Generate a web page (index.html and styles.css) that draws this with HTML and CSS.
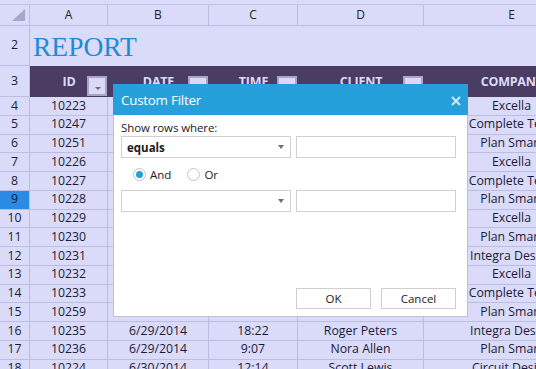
FILE: index.html
```html
<!DOCTYPE html>
<html>
<head>
<meta charset="utf-8">
<link rel="stylesheet" href="styles.css">
</head>
<body>
<div class="sheet">
  <div class="grid colhdr-row">
    <div class="c corner"><span class="tri"></span></div>
    <div class="c ch">A</div><div class="c ch">B</div><div class="c ch">C</div><div class="c ch">D</div><div class="c ch">E</div>
  </div>
  <div class="grid title-row">
    <div class="c rh">2</div>
    <div class="title">REPORT</div>
  </div>
  <div class="grid head-row">
    <div class="c rh">3</div>
    <div class="hc"><span>ID</span><span class="fbtn"></span></div>
    <div class="hc"><span>DATE</span><span class="fbtn"></span></div>
    <div class="hc"><span>TIME</span><span class="fbtn"></span></div>
    <div class="hc"><span>CLIENT</span><span class="fbtn"></span></div>
    <div class="hc"><span>COMPANY</span><span class="fbtn"></span></div>
  </div>
  <div class="grid data">
    <div class="c rh">4</div><div class="c">10223</div><div class="c"></div><div class="c"></div><div class="c"></div><div class="c">Excella</div>
    <div class="c rh">5</div><div class="c">10247</div><div class="c"></div><div class="c"></div><div class="c"></div><div class="c">Complete Tech</div>
    <div class="c rh">6</div><div class="c">10251</div><div class="c"></div><div class="c"></div><div class="c"></div><div class="c">Plan Smart</div>
    <div class="c rh">7</div><div class="c">10226</div><div class="c"></div><div class="c"></div><div class="c"></div><div class="c">Excella</div>
    <div class="c rh">8</div><div class="c">10227</div><div class="c"></div><div class="c"></div><div class="c"></div><div class="c">Complete Tech</div>
    <div class="c rh sel">9</div><div class="c">10228</div><div class="c"></div><div class="c"></div><div class="c"></div><div class="c">Plan Smart</div>
    <div class="c rh">10</div><div class="c">10229</div><div class="c"></div><div class="c"></div><div class="c"></div><div class="c">Excella</div>
    <div class="c rh">11</div><div class="c">10230</div><div class="c"></div><div class="c"></div><div class="c"></div><div class="c">Plan Smart</div>
    <div class="c rh">12</div><div class="c">10231</div><div class="c"></div><div class="c"></div><div class="c"></div><div class="c">Integra Design</div>
    <div class="c rh">13</div><div class="c">10232</div><div class="c"></div><div class="c"></div><div class="c"></div><div class="c">Excella</div>
    <div class="c rh">14</div><div class="c">10233</div><div class="c"></div><div class="c"></div><div class="c"></div><div class="c">Complete Tech</div>
    <div class="c rh">15</div><div class="c">10259</div><div class="c"></div><div class="c"></div><div class="c"></div><div class="c">Plan Smart</div>
    <div class="c rh">16</div><div class="c">10235</div><div class="c">6/29/2014</div><div class="c">18:22</div><div class="c">Roger Peters</div><div class="c">Integra Design</div>
    <div class="c rh">17</div><div class="c">10236</div><div class="c">6/29/2014</div><div class="c">9:07</div><div class="c">Nora Allen</div><div class="c">Plan Smart</div>
    <div class="c rh">18</div><div class="c">10224</div><div class="c">6/30/2014</div><div class="c">12:14</div><div class="c">Scott Lewis</div><div class="c">Circuit Design</div>
  </div>
</div>

<div class="dialog">
  <div class="dlg-title">
    <span>Custom Filter</span>
    <svg class="close" width="10" height="10" viewBox="0 0 10 10"><path d="M1 1 L9 9 M9 1 L1 9" stroke="#d4ecf8" stroke-width="1.8" fill="none"/></svg>
  </div>
  <div class="dlg-body">
    <div class="lbl">Show rows where:</div>
    <div class="cond">
      <div class="combo"><span class="val">equals</span><span class="arr"></span></div>
      <div class="tb"></div>
    </div>
    <div class="logic">
      <span class="opt"><span class="radio on"></span>And</span>
      <span class="opt"><span class="radio"></span>Or</span>
    </div>
    <div class="cond">
      <div class="combo"><span class="val"></span><span class="arr"></span></div>
      <div class="tb"></div>
    </div>
    <div class="btns">
      <span class="btn">OK</span>
      <span class="btn">Cancel</span>
    </div>
  </div>
</div>
</body>
</html>
```

FILE: styles.css
```css
html, body {
  margin: 0;
  padding: 0;
}
body {
  width: 536px;
  height: 369px;
  overflow: hidden;
  background: #dadaf9;
  font-family: "Open Sans", "Noto Sans", sans-serif;
  color: #1a1a36;
  position: relative;
}
.sheet {
  padding-top: 4px;
}
.grid {
  display: grid;
  grid-template-columns: 30px 78px 101px 89px 126px 176px;
  width: 600px;
}
.c {
  box-sizing: border-box;
  border-right: 1px solid #bcbce4;
  border-bottom: 1px solid #bcbce4;
  display: flex;
  align-items: center;
  justify-content: center;
  font-size: 12.3px;
  white-space: nowrap;
  overflow: visible;
  line-height: 1;
}
.colhdr-row {
  border-top: 1px solid #c4c4ea;
  height: 21px;
  grid-template-rows: 21px;
}
.colhdr-row .c {
  font-size: 12px;
  color: #222;
}
.corner {
  position: relative;
}
.tri {
  position: absolute;
  right: 4px;
  bottom: 4px;
  width: 0;
  height: 0;
  border-left: 13px solid transparent;
  border-bottom: 12px solid #a7a7c9;
}
.title-row {
  grid-template-rows: 40px;
}
.title {
  grid-column: 2 / 7;
  font-family: "Liberation Serif", serif;
  font-size: 27.5px;
  color: #1e8ad8;
  display: flex;
  align-items: center;
  padding-left: 3px;
  padding-top: 2px;
}
.head-row {
  grid-template-rows: 31px;
}
.hc {
  background: #4a3c63;
  color: #dcdcf6;
  font-weight: 700;
  font-size: 12.5px;
  display: flex;
  align-items: center;
  justify-content: center;
  position: relative;
  letter-spacing: -0.2px;
}
.fbtn {
  position: absolute;
  right: 1px;
  top: 10px;
  width: 20px;
  height: 20px;
  box-sizing: border-box;
  border: 2px solid #a9a5c4;
  background: #dadaf6;
}
.fbtn::after {
  content: "";
  position: absolute;
  left: 6px;
  top: 9px;
  border-left: 3px solid transparent;
  border-right: 3px solid transparent;
  border-top: 3px solid #6a6a80;
}
.data {
  grid-auto-rows: 18.75px;
}
.sel {
  background: #2b8ae2;
}

/* dialog */
.dialog {
  position: absolute;
  left: 113px;
  top: 84px;
  width: 355px;
  height: 233px;
  box-sizing: border-box;
  border: 1px solid #c0c0d4;
  border-top: 0;
  background: #fff;
  display: flex;
  flex-direction: column;
  color: #1a1a1a;
}
.dlg-title {
  height: 31px;
  margin: 0 -1px;
  background: #26a0da;
  color: #fff;
  font-size: 13.3px;
  display: flex;
  align-items: center;
  justify-content: space-between;
  padding: 0 7px 0 8px;
  flex-shrink: 0;
  letter-spacing: -0.2px;
}
.close {
  margin-top: 2px;
}
.dlg-body {
  flex: 1;
  display: flex;
  flex-direction: column;
  padding: 5px 11px 7px 7px;
}
.lbl {
  font-size: 11.5px;
  height: 16px;
  line-height: 16px;
  letter-spacing: -0.1px;
}
.cond {
  display: flex;
  gap: 5px;
  height: 22px;
}
.combo {
  width: 170px;
  box-sizing: border-box;
  border: 1px solid #d0d0d0;
  display: flex;
  align-items: center;
  justify-content: space-between;
  padding: 0 6px 0 5px;
  font-size: 11.5px;
  font-weight: 700;
}
.arr {
  width: 0;
  height: 0;
  border-left: 3.5px solid transparent;
  border-right: 3.5px solid transparent;
  border-top: 4px solid #707070;
}
.tb {
  width: 160px;
  box-sizing: border-box;
  border: 1px solid #d0d0d0;
}
.logic {
  height: 32px;
  display: flex;
  align-items: center;
  gap: 16px;
  padding-left: 12px;
  font-size: 11.5px;
}
.opt {
  display: flex;
  align-items: center;
  gap: 4px;
}
.radio {
  width: 13px;
  height: 13px;
  box-sizing: border-box;
  border: 1px solid #c4c4c4;
  border-radius: 50%;
  position: relative;
}
.radio.on::after {
  content: "";
  position: absolute;
  left: 2px;
  top: 2px;
  width: 7px;
  height: 7px;
  border-radius: 50%;
  background: #26a0da;
}
.btns {
  margin-top: auto;
  display: flex;
  justify-content: flex-end;
  gap: 10px;
}
.btn {
  width: 75px;
  height: 21px;
  box-sizing: border-box;
  border: 1px solid #cfcfcf;
  display: flex;
  align-items: center;
  justify-content: center;
  font-size: 11.5px;
}
```
